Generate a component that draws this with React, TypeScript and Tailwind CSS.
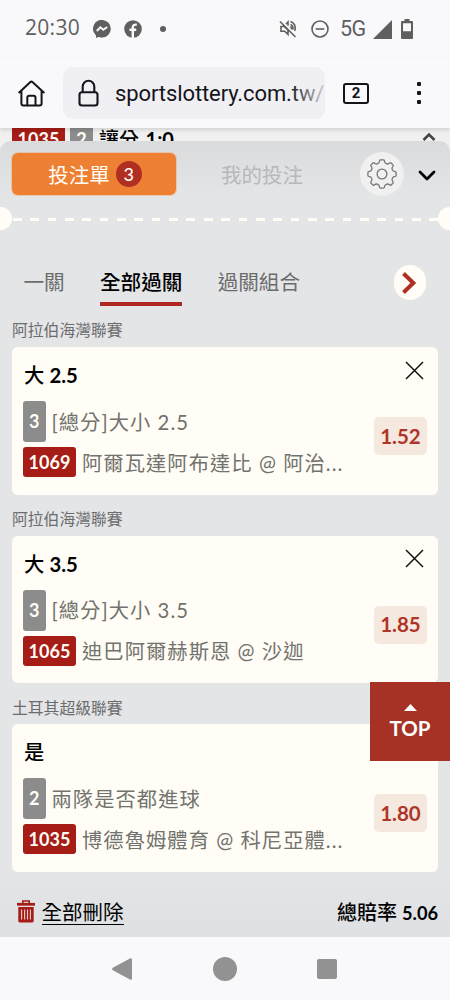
// Bet slip page as shown in a mobile browser: phone status bar, address bar,
// the slip panel with its selections, and the system navigation bar.

import { clsx } from "clsx";
import type { ReactNode } from "react";

const bets: Bet[] = [
  {
    league: "阿拉伯海灣聯賽",
    pick: "大",
    line: "2.5",
    kind: "3",
    market: "[總分]大小 2.5",
    code: "1069",
    match: "阿爾瓦達阿布達比 @ 阿治...",
    odds: "1.52",
  },
  {
    league: "阿拉伯海灣聯賽",
    pick: "大",
    line: "3.5",
    kind: "3",
    market: "[總分]大小 3.5",
    code: "1065",
    match: "迪巴阿爾赫斯恩 @ 沙迦",
    odds: "1.85",
  },
  {
    league: "土耳其超級聯賽",
    pick: "是",
    kind: "2",
    market: "兩隊是否都進球",
    code: "1035",
    match: "博德魯姆體育 @ 科尼亞體...",
    odds: "1.80",
  },
];

export default function App() {
  return (
    <main className="relative flex h-[1000px] w-[450px] flex-col overflow-hidden bg-[#f9f9fb] font-['Lato','Noto_Sans_CJK_TC',sans-serif]">
      <StatusBar />
      <AddressBar />
      <div className="flex h-[809px] flex-col bg-[#f0f0f1]">
        <PageStrip />
        <BetSlip />
      </div>
      <SystemNav />
      <BackToTop />
    </main>
  );
}

// ── Browser and phone ─────────────────────────────────────────────────────────

function StatusBar() {
  return (
    <div className="flex h-[58px] shrink-0 items-center justify-between pr-[37px] pl-[25px] font-['Roboto',sans-serif] text-[#5f5f5f]">
      <div className="flex items-center">
        <span className="w-[68px] pb-[3px] font-['Open_Sans','Roboto',sans-serif] text-[21px] leading-none tracking-[0.3px]">
          20:30
        </span>
        <svg className="h-[18px] w-[18px]" viewBox="0 0 18 18">
          <path
            fill="currentColor"
            d="M9 0a9 9 0 0 1 0 17.3c-1.2 0-2.2-.2-3.2-.6L3 18v-2.9A8.7 8.7 0 0 1 9 0Z"
          />
          <circle cx="9" cy="8.8" r="8.8" fill="currentColor" />
          <path
            d="m3.8 11 3.6-3.7 2.9 2.4L14.2 7"
            fill="none"
            stroke="#f9f9fb"
            strokeWidth="2"
          />
        </svg>
        <svg className="ml-[13px] h-[18px] w-[18px]" viewBox="0 0 18 18">
          <circle cx="9" cy="9" r="8.8" fill="currentColor" />
          <path
            d="M8.8 18V7.5c0-2.2 1.2-3.2 4-2.8M5.4 9.8h6.8"
            fill="none"
            stroke="#f9f9fb"
            strokeWidth="2.4"
          />
        </svg>
        <span className="ml-[18px] size-[6px] rounded-full bg-[#5f5f5f]" />
      </div>
      <div className="flex items-center">
        <svg
          className="h-[18px] w-[18px]"
          viewBox="0 0 18 18"
          fill="none"
          stroke="currentColor"
          strokeWidth="1.6"
        >
          <path d="M1 1.5 16.5 17M2 6.5h3.2L9 10.2v4.2l-3.4-3.2H2ZM7 4l2-2v3.7M11.4 6.5q1.5 1.2 1.2 3M11.5 1.5c4 1.3 5.8 5.4 4.2 9.4M11.5 4.4q3 1.5 2.5 5" />
        </svg>
        <svg
          className="ml-[14px] h-[18px] w-[18px]"
          viewBox="0 0 18 18"
          fill="none"
          stroke="currentColor"
          strokeWidth="1.6"
        >
          <circle cx="9" cy="9" r="8" />
          <path d="M4.7 9h8.6" />
        </svg>
        <span className="ml-[11px] w-[28px] text-[21.5px] leading-none tracking-tight">
          5G
        </span>
        <svg className="ml-[5px] h-[19px] w-[19px]" viewBox="0 0 19 19">
          <path d="M19 0v19H0Z" fill="currentColor" />
        </svg>
        <svg className="ml-[9px] h-[20px] w-[12px]" viewBox="0 0 12 20">
          <path
            fill="currentColor"
            fillRule="evenodd"
            d="M3.5 0h5v2H11a1 1 0 0 1 1 1v16a1 1 0 0 1-1 1H1a1 1 0 0 1-1-1V3a1 1 0 0 1 1-1h2.5ZM2 4.2v8h8v-8Z"
          />
        </svg>
      </div>
    </div>
  );
}

function AddressBar() {
  return (
    <div className="z-10 flex h-[70px] shrink-0 items-center bg-[#f9f9fb] pl-[18px] text-[#15141a] shadow-[0_2px_4px_rgba(0,0,0,0.13)]">
      <svg
        className="h-[27px] w-[27px]"
        viewBox="0 0 27 27"
        fill="none"
        stroke="currentColor"
        strokeWidth="2"
        strokeLinecap="round"
        strokeLinejoin="round"
      >
        <path d="M1.2 12.4 12.4 2.1a1.5 1.5 0 0 1 2 0l11.4 10.3M3.4 11v12.6a2 2 0 0 0 2 2h16.2a2 2 0 0 0 2-2V11M9.3 25.4v-7.6a2 2 0 0 1 2-2h4.2a2 2 0 0 1 2 2v7.6" />
      </svg>
      <div className="relative ml-[18px] flex h-[52px] w-[262px] items-center overflow-hidden rounded-[10px] bg-[#f0f0f4] pl-[15px]">
        <svg
          className="h-[28px] w-[21px] shrink-0"
          viewBox="0 0 21 28"
          fill="none"
          stroke="currentColor"
          strokeWidth="2.1"
        >
          <rect x="1.5" y="13.2" width="18" height="13.3" rx="2.5" />
          <path d="M4.7 13V7.5a5.8 5.8 0 0 1 11.6 0V13" />
        </svg>
        <span className="ml-[16px] pt-[2px] font-['Roboto',sans-serif] text-[22px] leading-[28px] tracking-[-0.1px] whitespace-nowrap">
          sportslottery.com.tw/
        </span>
        <span className="absolute inset-y-0 right-0 w-[36px] bg-linear-to-r from-[#f0f0f4]/0 to-[#f0f0f4]/85" />
      </div>
      <span className="ml-[18px] flex h-[21px] w-[26px] items-center justify-center rounded-[3px] border-2 border-[#15141a] font-['Roboto',sans-serif] text-[15px] leading-none font-bold">
        2
      </span>
      <span className="ml-[48px] flex flex-col gap-[5px]">
        <i className="size-[4px] rounded-[1px] bg-[#15141a]" />
        <i className="size-[4px] rounded-[1px] bg-[#15141a]" />
        <i className="size-[4px] rounded-[1px] bg-[#15141a]" />
      </span>
    </div>
  );
}

function SystemNav() {
  return (
    <div className="flex h-[63px] shrink-0 items-center pl-[112px] text-[#929292]">
      <svg className="h-[24px] w-[21px]" viewBox="0 0 21 24" fill="currentColor">
        <path d="M.8 10.7 18 1.4q2-.9 2 1.2v18.8q0 2-2 1.2L.8 13.2q-1.4-1.2 0-2.5Z" />
      </svg>
      <span className="ml-[80px] size-[24px] rounded-full bg-current" />
      <span className="ml-[80px] size-[20px] rounded-[2px] bg-current" />
    </div>
  );
}

// ── Page ──────────────────────────────────────────────────────────────────────

/** The sliver of the page that stays visible above the open slip. */
function PageStrip() {
  return (
    <div className="flex h-[13px] shrink-0 items-start overflow-hidden pr-[14px] pl-[12px] leading-[22px] font-bold">
      <span className="h-[28px] w-[53px] bg-[#a61c16] text-center text-[18px] text-[#fffdf5]">
        1035
      </span>
      <span className="ml-[5px] h-[28px] w-[23px] bg-[#8c8c8c] text-center text-[18px] text-[#fffdf5]">
        2
      </span>
      <span className="ml-[6px] text-[20px] leading-[23px] font-medium whitespace-pre text-black">
        讓分 <b className="pl-[1.5px]">1:0</b>
      </span>
      <svg
        className="mt-[4px] ml-auto h-[12px] w-[14px]"
        viewBox="0 0 14 12"
        fill="none"
        stroke="#444"
        strokeWidth="2.6"
      >
        <path d="m1.5 8 5.5-5.5L12.5 8" />
      </svg>
    </div>
  );
}

function BetSlip() {
  return (
    <section className="flex flex-1 flex-col rounded-t-[11px] bg-[#e4e5e7] bg-linear-to-b from-[#dadbdd] to-[#e4e5e7] to-[55px]">
      <SlipHeader />
      <TearLine />
      <nav className="flex h-[76px] items-end pl-[23.5px] text-[20.6px] leading-[30px] text-[#6b6c6d]">
        <SlipTab>一關</SlipTab>
        <SlipTab active>全部過關</SlipTab>
        <SlipTab>過關組合</SlipTab>
        <span className="mr-[24px] mb-[6px] ml-auto flex h-[35px] w-[32px] items-center justify-center rounded-full bg-[#fffdf5]">
          <svg
            className="mr-[2px] h-[22px] w-[15px]"
            viewBox="0 0 15 22"
            fill="none"
            stroke="#ae3023"
            strokeWidth="4"
          >
            <path d="m1.5 1.5 9.8 9.5-9.8 9.5" />
          </svg>
        </span>
      </nav>
      {bets.map((bet) => (
        <BetCard key={bet.code} bet={bet} />
      ))}
      <footer className="flex flex-1 items-center bg-linear-to-b from-[#e4e5e7] to-[#dfe0e3] pt-[15px] pr-[12px] pl-[17px] text-[20.5px] leading-none text-black">
        <svg
          className="mb-[2px] h-[23px] w-[18px]"
          viewBox="0 0 18 23"
          fill="none"
          stroke="#a61c16"
        >
          <path d="M5.8 3.4V1h6.4v2.4" strokeWidth="1.6" />
          <path d="M0 4.3h18" strokeWidth="2.8" />
          <path d="M1.3 7h15.4v14a1.4 1.4 0 0 1-1.4 1.4H2.7A1.4 1.4 0 0 1 1.3 21Z" fill="#a61c16" stroke="none" />
          <path
            d="M4.6 9.5v10M7.6 9.5v10M10.5 9.5v10M13.4 9.5v10"
            stroke="#e4cfce"
            strokeWidth="1.1"
          />
        </svg>
        <span className="ml-[6.5px] h-[26px] border-b border-black leading-[26px]">
          全部刪除
        </span>
        <span className="ml-auto text-[20px] font-medium">
          總賠率 <span className="text-[18.2px] font-bold">5.06</span>
        </span>
      </footer>
    </section>
  );
}

function SlipHeader() {
  return (
    <header className="flex h-[65px] items-center pt-[1px] pl-[12px] text-[20.5px] leading-none">
      <span className="flex h-[42px] w-[164px] items-center justify-center rounded-[6px] bg-[#ed8032] pr-[3px] text-[#fffdf5] ring-1 ring-[#f09a5c]/40">
        <span className="ml-[5px] pt-[2px]">投注單</span>
        <span className="ml-[6px] flex size-[26px] items-center justify-center rounded-full bg-[#b02e22] text-[18px] font-medium">
          3
        </span>
      </span>
      <span className="ml-[45px] pt-[2px] text-[#b6b8ba]">我的投注</span>
      <span className="ml-[57px] flex size-[44px] items-center justify-center rounded-full bg-[#f0f0f0]">
        <svg
          className="size-[30px]"
          viewBox="0 0 30 30"
          fill="none"
          stroke="#777"
          strokeWidth="1.3"
          strokeLinejoin="round"
        >
          <circle cx="15" cy="15" r="4.9" />
          <path d="M13.5.9h3q.8 0 .9.9.2 2.3 1.8 2.9 1.8.8 3.6-.7.7-.6 1.3 0l1.9 1.9q.6.6 0 1.3-1.5 1.8-.7 3.6.6 1.6 2.9 1.8.9.1.9.9v3q0 .8-.9.9-2.3.2-2.9 1.8-.8 1.8.7 3.6.6.7 0 1.3l-1.9 1.9q-.6.6-1.3 0-1.8-1.5-3.6-.7-1.6.6-1.8 2.9-.1.9-.9.9h-3q-.8 0-.9-.9-.2-2.3-1.8-2.9-1.8-.8-3.6.7-.7.6-1.3 0L4 24.1q-.6-.6 0-1.3 1.5-1.8.7-3.6-.6-1.6-2.9-1.8-.9-.1-.9-.9v-3q0-.8.9-.9 2.3-.2 2.9-1.8.8-1.8-.7-3.6-.6-.7 0-1.3L5.9 4q.6-.6 1.3 0 1.8 1.5 3.6.7 1.6-.6 1.8-2.9.1-.9.9-.9Z" />
        </svg>
      </span>
      <svg
        className="mt-[3px] ml-[14px] h-[12px] w-[18px]"
        viewBox="0 0 18 12"
        fill="none"
        stroke="#000"
        strokeWidth="2.8"
        strokeLinecap="round"
        strokeLinejoin="round"
      >
        <path d="m2 2 7 7 7-7" />
      </svg>
    </header>
  );
}

/** Perforation between the slip header and its body. */
function TearLine() {
  return (
    <div className="flex h-[24px] items-center justify-between">
      <span className="h-[23px] w-[12px] rounded-r-full bg-[#fffdf5]" />
      <span className="mt-[2px] ml-[1px] h-[3px] flex-1 bg-[repeating-linear-gradient(90deg,#fffdf5_0_8.7px,transparent_8.7px_17.35px)]" />
      <span className="h-[23px] w-[12px] rounded-l-full bg-[#fffdf5]" />
    </div>
  );
}

function SlipTab({ active, children }: { active?: boolean; children: ReactNode }) {
  return (
    <span
      className={clsx(
        "mr-[35.3px] h-[39px] shrink-0 border-b-4 whitespace-nowrap",
        active
          ? "border-[#ae2a20] font-medium text-black"
          : "border-transparent",
      )}
    >
      {children}
    </span>
  );
}

function BetCard({ bet }: { bet: Bet }) {
  return (
    <article className="h-[188.7px] shrink-0 px-[12px]">
      <h2 className="h-[41px] pt-[12.4px] text-[15.8px] leading-[24px] text-[#6b6c6d]">
        {bet.league}
      </h2>
      <div className="flex h-[147.5px] justify-between rounded-[6px] bg-[#fffdf5] pr-[11px] pl-[11px]">
        <div>
          <h3 className="pt-[14px] pl-[1px] text-[20.3px] leading-[28px] font-medium text-black">
            {bet.pick} {bet.line && <b>{bet.line}</b>}
          </h3>
          <div className="mt-[12px] flex h-[41px] items-center text-[20.3px] tracking-[1.05px] whitespace-nowrap text-[#72726e]">
            <span className="mr-[6px] flex h-full w-[22.5px] items-center justify-center rounded-[3px] bg-[#8c8c8c] text-[18px] font-bold tracking-normal text-[#fffdf5]">
              {bet.kind}
            </span>
            <span className="pt-[1px]">{bet.market}</span>
          </div>
          <div className="mt-[5px] flex h-[30px] items-center text-[20.3px] tracking-[1.05px] whitespace-nowrap text-[#72726e]">
            <span className="mr-[6px] flex h-full w-[53px] items-center justify-center rounded-[3px] bg-[#a61c16] pt-[1px] text-[18px] font-bold tracking-normal text-[#fffdf5]">
              {bet.code}
            </span>
            <span className="pt-[2px]">{bet.match}</span>
          </div>
        </div>
        <div className="flex flex-col items-end">
          <svg
            className="mt-[13.5px] mr-[3.5px] size-[19px]"
            viewBox="0 0 19 19"
            fill="none"
            stroke="#111"
            strokeWidth="1.5"
          >
            <path d="m1 1 17 17M18 1 1 18" />
          </svg>
          <span className="mt-[37.5px] flex h-[38px] w-[53px] items-center justify-center rounded-[5px] bg-[#f5e8df] text-[20.5px] font-bold text-[#ae3528]">
            {bet.odds}
          </span>
        </div>
      </div>
    </article>
  );
}

function BackToTop() {
  return (
    <button className="absolute top-[682px] right-0 flex h-[79px] w-[80px] flex-col items-center bg-[#a63226] pt-[22px] text-[20.5px] leading-[25px] font-bold text-white">
      <svg className="mb-[5px] h-[7px] w-[13px]" viewBox="0 0 13 7">
        <path d="M6.5 0 13 7H0Z" fill="currentColor" />
      </svg>
      TOP
    </button>
  );
}

// ── Types ─────────────────────────────────────────────────────────────────────

interface Bet {
  league: string;
  pick: string;
  /** Goal line, only for over/under picks. */
  line?: string;
  kind: string;
  market: string;
  code: string;
  match: string;
  odds: string;
}
